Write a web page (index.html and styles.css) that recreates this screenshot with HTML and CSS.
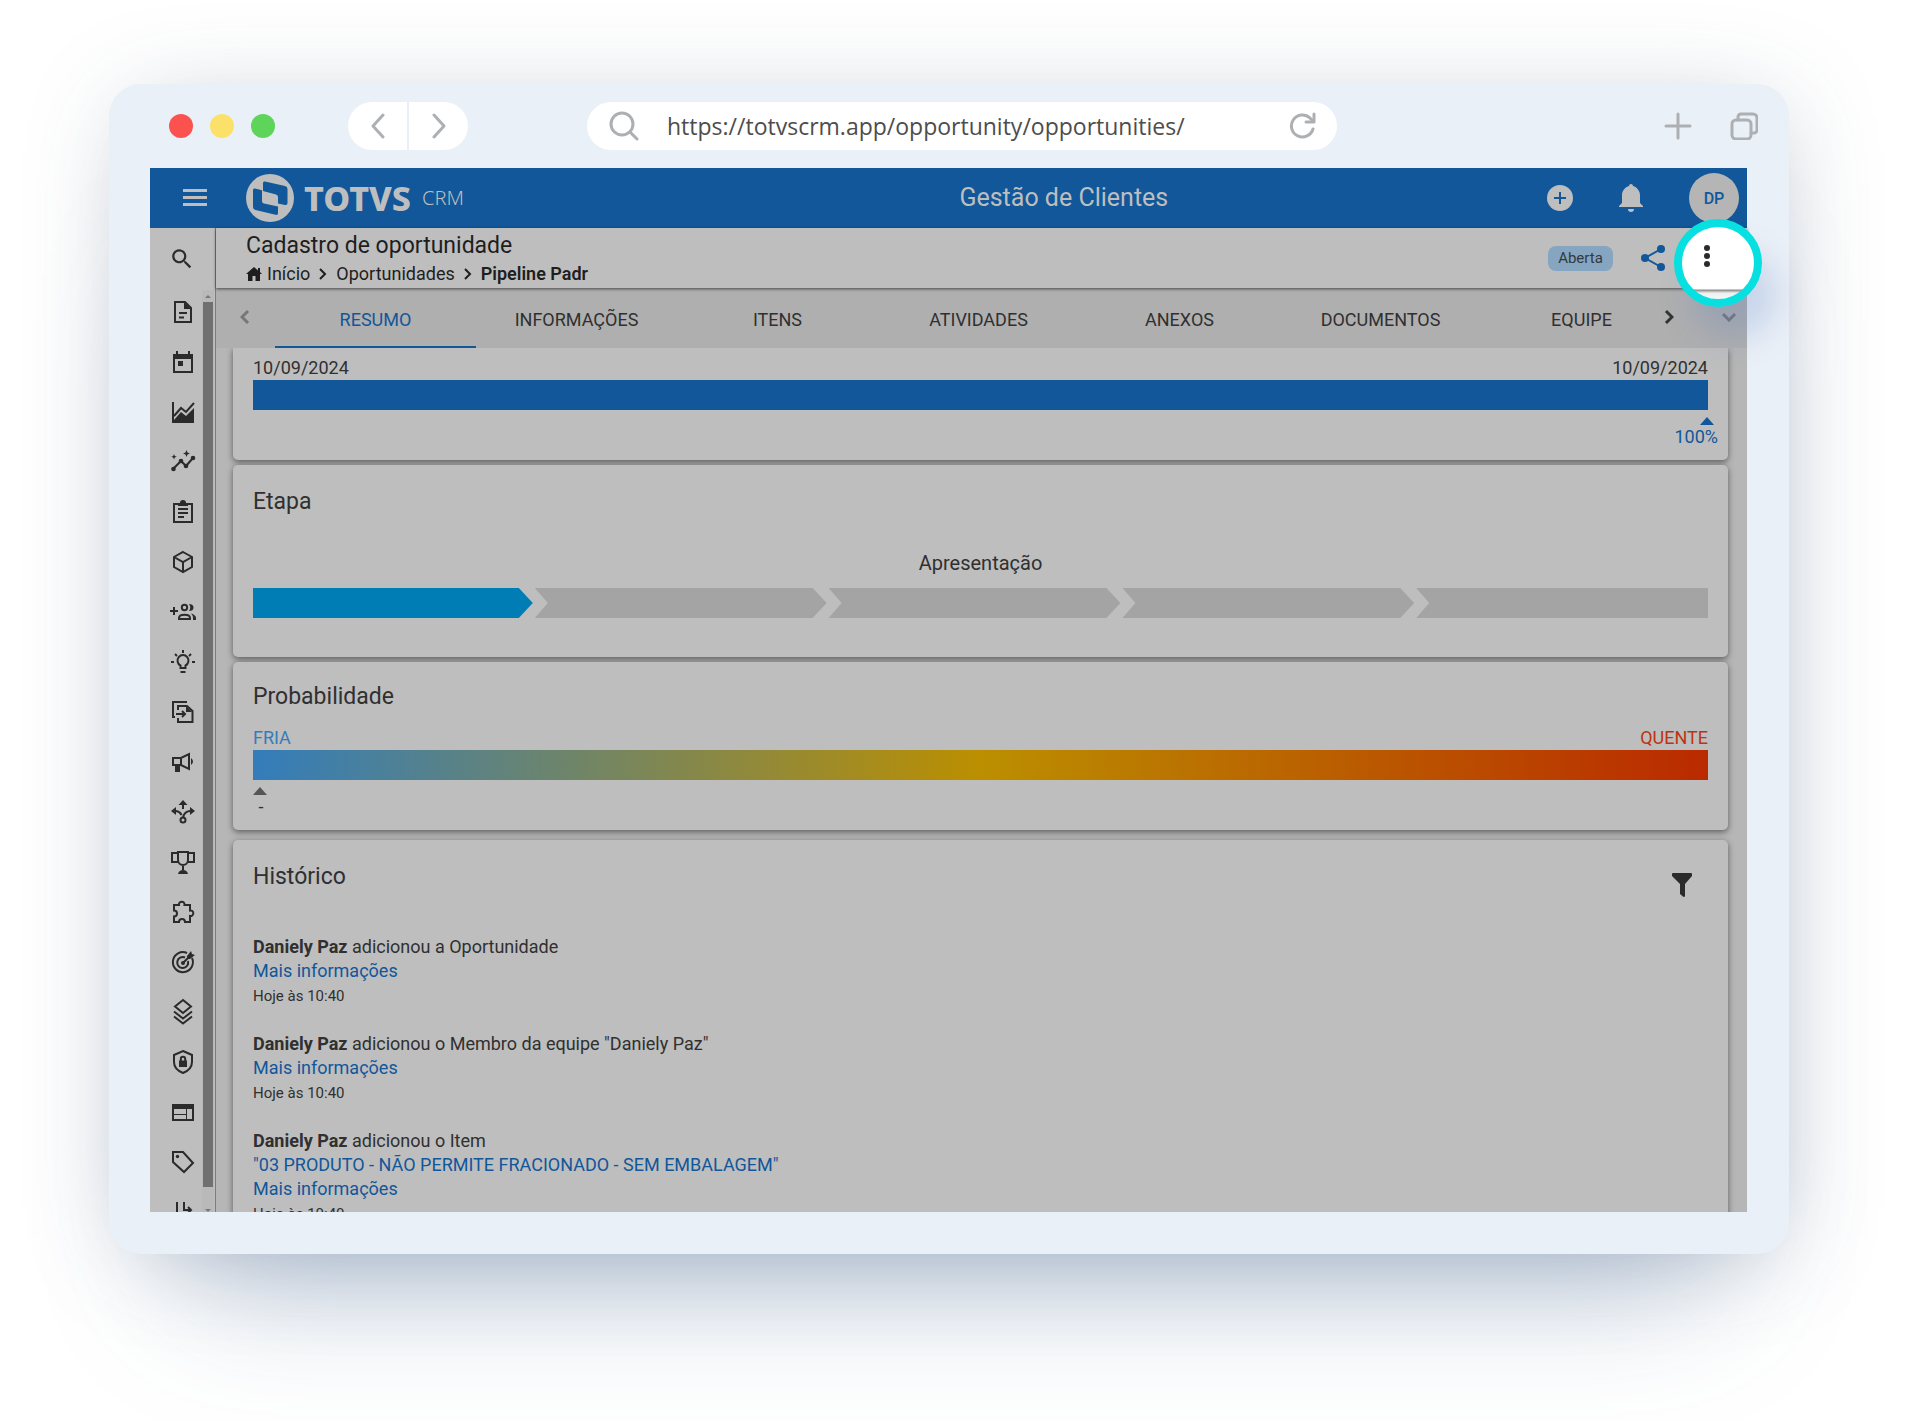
FILE: index.html
```html
<!DOCTYPE html>
<html lang="pt-BR">
<head>
<meta charset="utf-8">
<title>TOTVS CRM - Gestão de Clientes</title>
<link rel="stylesheet" href="styles.css">
</head>
<body>
<div class="window">
  <div class="chrome">
    <div class="lights"><span class="light red"></span><span class="light yellow"></span><span class="light green"></span></div>
    <div class="history-nav">
      <button type="button" aria-label="Voltar"><svg width="14" height="26" viewBox="0 0 14 26"><path d="M12 2 2 13l10 11"/></svg></button>
      <button type="button" aria-label="Avançar"><svg width="14" height="26" viewBox="0 0 14 26"><path d="m2 2 10 11L2 24"/></svg></button>
    </div>
    <div class="address">
      <svg width="30" height="30" viewBox="0 0 30 30"><circle cx="13" cy="13" r="11"/><path d="m21 21 7 7"/></svg>
      <input type="text" aria-label="Endereço" value="https://totvscrm.app/opportunity/opportunities/">
      <button type="button" aria-label="Recarregar"><svg width="28" height="28" viewBox="0 0 28 28"><path d="M24 17a11 11 0 1 1-3-11l3 3"/><path d="M25 2v8h-8"/></svg></button>
    </div>
    <div class="chrome-actions">
      <button type="button" aria-label="Nova aba"><svg width="28" height="28" viewBox="0 0 28 28"><path d="M14 2v24M2 14h24"/></svg></button>
      <button type="button" aria-label="Abas"><svg width="28" height="28" viewBox="0 0 28 28"><rect x="2" y="8" width="19" height="19" rx="4"/><path d="M8 8V5a3 3 0 0 1 3-3h12a4 4 0 0 1 4 4v12a3 3 0 0 1-3 3h-3"/></svg></button>
    </div>
  </div>

  <div class="screen">
    <header class="topbar">
      <button type="button" class="menu" aria-label="Menu"><svg width="24" height="18" viewBox="0 0 24 18"><path d="M0 1.5h24M0 8.5h24M0 15.5h24"/></svg></button>
      <div class="brand">
        <svg width="48" height="48" viewBox="0 0 48 48"><circle cx="24" cy="24" r="24" fill="#bebebe"/><path d="M19 7.500 39 12q2.500.6 2.500 3V29q0 2.500-2.500 2L32 29.500V23q0-2-2-2.500L17 17V9q0-2 2-1.500z" fill="#11579a"/><path d="M9 14.500 16 16.300V27q0 2 2 2.500L32 32.500V39q0 2.500-2.500 1.800L9.500 36Q7 35.300 7 33V16q0-2 2-1.500z" fill="#11579a"/></svg>
        <strong>TOTVS</strong><span>CRM</span>
      </div>
      <h1>Gestão de Clientes</h1>
      <div class="top-actions">
        <button type="button" aria-label="Adicionar"><svg width="26" height="26" viewBox="0 0 26 26"><circle cx="13" cy="13" r="13" fill="#bebebe"/><path d="M13 7v12M7 13h12" stroke="#11579a" stroke-width="2"/></svg></button>
        <button type="button" aria-label="Notificações"><svg width="24" height="28" viewBox="0 0 24 28"><path d="M12 0a2 2 0 0 1 2 2c4 1 7 5 7 9v8l3 3v1H0v-1l3-3v-8c0-4 3-8 7-9a2 2 0 0 1 2-2zM9 25h6a3 3 0 0 1-6 0z" fill="#bebebe"/></svg></button>
        <button type="button" class="avatar">DP</button>
      </div>
    </header>

    <div class="body">
      <nav class="sidebar" aria-label="Módulos">
        <div class="rail-search"><a href="#" aria-label="Buscar"><svg viewBox="0 0 24 24" class="search"><path class="f" d="M15.500 14h-.8l-.3-.3A6.500 6.500 0 1 0 13.700 14.400l.3.300v.8l5 5 1.500-1.500zm-6 0a4.500 4.500 0 1 1 0-9 4.500 4.500 0 0 1 0 9z"/></svg></a></div>
        <div class="rail">
          <div class="rail-icons">
            <a href="#" aria-label="Documentos"><svg viewBox="0 0 24 24"><path d="M4 2h10l6 6v14H4z"/><path class="f" d="M13 2v7h7z"/><path d="M8 13h8M8 17.500h5"/></svg></a>
            <a href="#" aria-label="Agenda"><svg viewBox="0 0 24 24"><path d="M3 5h18v17H3z"/><path class="f" d="M2 4h20v5H2zM5 1h2v4H5zM17 1h2v4h-2zM7 11h5v5H7z"/></svg></a>
            <a href="#" aria-label="Gráficos"><svg viewBox="0 0 24 24"><path d="M2 2v20h21M3 16l7-8 5 4 8-9"/><path class="f" d="M3 22v-2l7-8 5 4 8-8v14z"/></svg></a>
            <a href="#" aria-label="Indicadores"><svg viewBox="0 0 24 24"><path d="m3 18 7-7 5 5 7-8"/><circle class="f" cx="2.500" cy="19" r="2.300"/><circle class="f" cx="10" cy="11" r="2.300"/><circle class="f" cx="15" cy="16" r="2.300"/><circle class="f" cx="22" cy="8" r="2.300"/><path class="f" d="m15.500 0 1 2.500 2.500 1-2.500 1-1 2.500-1-2.500-2.500-1 2.500-1zM3 4l.8 2 2 .8-2 .8L3 9.500l-.8-1.900-2-.8 2-.8z"/></svg></a>
            <a href="#" aria-label="Tarefas"><svg viewBox="0 0 24 24"><path d="M3 4h18v18H3zM7 9h10M7 13h10M7 17h6"/><path class="f" d="M7 3h2a3 3 0 0 1 6 0h2v3H7z"/></svg></a>
            <a href="#" aria-label="Produtos"><svg viewBox="0 0 24 24"><path d="m12 2 9 5v10l-9 5-9-5V7zM3 7l9 5 9-5M12 12v10"/></svg></a>
            <a href="#" aria-label="Contatos"><svg viewBox="0 0 24 24" class="wide"><path d="M-1 11h8M3 7v8M8 19v-1c0-4.500 11-4.500 11 0v1z"/><circle cx="13.500" cy="7.500" r="2.700"/><path class="f" d="M18 4q4.500 0 4.500 3.500T18 11q2.500-3.500 0-7zM20 13.500q5 1.500 5 4.500v2h-3v-2q0-2.500-2-4.500z"/></svg></a>
            <a href="#" aria-label="Ideias"><svg viewBox="0 0 24 24"><path d="M9.500 18v-2.500a5.500 5.500 0 1 1 5 0V18zM9.500 22h5M12 0v3M0 12h3M21 12h3M4 4l2 2M20 4l-2 2"/></svg></a>
            <a href="#" aria-label="Transferências"><svg viewBox="0 0 24 24"><path d="M4 17H2V2h14M7 10V6h9l5.500 5v11H7v-4M5 14h9M11 11l3 3-3 3"/><path class="f" d="M15 6v6h6z"/></svg></a>
            <a href="#" aria-label="Campanhas"><svg viewBox="0 0 24 24"><path d="M2 8h8l8-4v15l-8-4H2zM10 8v7"/><path class="f" d="M4 15h5v7H4zM20 8q4 3.500 0 7z"/></svg></a>
            <a href="#" aria-label="Rotas"><svg viewBox="0 0 24 24"><circle cx="12" cy="20" r="2.500"/><path d="M12 9V3M2 11h3q4 .5 5.500 4M12 18q1-6.500 7-7h3"/><path class="f" d="m12 0 4.500 5h-9zM0 11l5-4v8zM24 11l-5-4v8z"/></svg></a>
            <a href="#" aria-label="Metas"><svg viewBox="0 0 24 24"><path d="M7 2h10v8a5 5 0 0 1-10 0zM7 3H1v9h6M17 3h6v9h-6M12 15v5"/><path class="f" d="M7 24q1-4 5-4t5 4z"/></svg></a>
            <a href="#" aria-label="Extensões"><svg viewBox="0 0 24 24"><path d="M3 5h5a2.800 2.800 0 1 1 5.500 0H19v5.500a2.800 2.800 0 1 1 0 5.500v6h-5a3 3 0 0 0-6 0H3v-5.500a3 3 0 0 0 0-6z"/></svg></a>
            <a href="#" aria-label="Objetivos"><svg viewBox="0 0 24 24"><path d="M16 3a10 10 0 1 0 5 5M14 7.500A5.500 5.500 0 1 0 17 11M12 13l8-8"/><circle class="f" cx="12" cy="13" r="2"/><path class="f" d="m16 6 4-5 1 3 3 1-5 4-3 0z"/></svg></a>
            <a href="#" aria-label="Camadas"><svg viewBox="0 0 24 24"><path d="m12 0 8 6.500-8 6.500-8-6.500zM3 11.500l9 7 9-7M3 16.500l9 7 9-7"/></svg></a>
            <a href="#" aria-label="Segurança"><svg viewBox="0 0 24 24"><path d="m12 1 9 4v7c0 5-4 9-9 11-5-2-9-6-9-11V5zM9.800 11V9a2.200 2.200 0 0 1 4.400 0v2"/><path class="f" d="M8 10.500h8V17H8z"/></svg></a>
            <a href="#" aria-label="Painéis"><svg viewBox="0 0 24 24"><path d="M2 5h20v15H2z"/><path class="f" d="M2 4h20v5H2z"/><path class="thin" d="M2 14.500h13M15.500 8v12"/></svg></a>
            <a href="#" aria-label="Etiquetas"><svg viewBox="0 0 24 24"><path d="M2 2h10l10 11-9 9L2 12z"/><circle class="f" cx="6.500" cy="6.500" r="1.700"/></svg></a>
            <a href="#" aria-label="Fluxos"><svg viewBox="0 0 24 24"><path d="M6 2v20M13 2v8h7M17 7l3 3-3 3"/></svg></a>
          </div>
          <div class="scrollbar" aria-hidden="true"><span class="up"></span><span class="thumb"></span><span class="down"></span></div>
        </div>
      </nav>

      <main class="main">
        <div class="page-head">
          <div class="titles">
            <h2>Cadastro de oportunidade</h2>
            <nav class="crumbs" aria-label="Navegação">
              <a href="#"><svg width="16" height="14" viewBox="0 0 16 14"><path d="M8 0 0 7h2v7h4.500V9h3v5H14V7h2l-2-2V1h-2v2.500z" fill="#1e1e1e"/></svg>Início</a>
              <svg class="sep" width="8" height="12" viewBox="0 0 8 12"><path d="m1 1 5 5-5 5"/></svg>
              <a href="#">Oportunidades</a>
              <svg class="sep" width="8" height="12" viewBox="0 0 8 12"><path d="m1 1 5 5-5 5"/></svg>
              <strong>Pipeline Padr</strong>
            </nav>
          </div>
          <span class="status">Aberta</span>
          <button type="button" class="share" aria-label="Compartilhar"><svg width="24" height="26" viewBox="0 0 24 26"><path d="M20 4 4 13l16 9" fill="none" stroke="#11579a" stroke-width="2"/><g fill="#11579a"><circle cx="20" cy="4" r="4"/><circle cx="4" cy="13" r="4"/><circle cx="20" cy="22" r="4"/></g></svg></button>
          <button type="button" class="spotlight" aria-label="Mais opções"><svg width="6" height="24" viewBox="0 0 6 24"><circle cx="3" cy="4" r="3"/><circle cx="3" cy="12" r="3"/><circle cx="3" cy="20" r="3"/></svg></button>
        </div>

        <nav class="tabs" aria-label="Seções">
          <button type="button" class="arrow off" aria-label="Anterior"><svg width="10" height="16" viewBox="0 0 10 16"><path d="M8 2 2 8l6 6"/></svg></button>
          <div class="tab-list">
            <a href="#" class="on">RESUMO</a><a href="#">INFORMAÇÕES</a><a href="#">ITENS</a><a href="#">ATIVIDADES</a><a href="#">ANEXOS</a><a href="#">DOCUMENTOS</a><a href="#">EQUIPE</a>
          </div>
          <button type="button" class="arrow" aria-label="Próximo"><svg width="10" height="16" viewBox="0 0 10 16"><path d="m2 2 6 6-6 6"/></svg></button>
          <button type="button" class="arrow more" aria-label="Expandir"><svg width="16" height="10" viewBox="0 0 16 10"><path d="m2 2 6 6 6-6"/></svg></button>
        </nav>

        <div class="content">
          <section class="card period">
            <div class="ends"><span>10/09/2024</span><span>10/09/2024</span></div>
            <div class="bar"></div>
            <div class="marker end"><i></i><span>100%</span></div>
          </section>
          <section class="card stage">
            <h3>Etapa</h3>
            <p>Apresentação</p>
            <div class="steps"><span class="done"></span><span></span><span></span><span></span><span></span></div>
          </section>
          <section class="card chance">
            <h3>Probabilidade</h3>
            <div class="ends"><span class="cold">FRIA</span><span class="hot">QUENTE</span></div>
            <div class="bar heat"></div>
            <div class="marker start"><i></i><span>-</span></div>
          </section>
          <section class="card log">
            <div class="log-head"><h3>Histórico</h3><button type="button" aria-label="Filtrar"><svg width="20" height="24" viewBox="0 0 20 24"><path d="M1 0h18q1 0 1 1v2l-7 8v12q0 1-1.500 1L8 21V11L0 3V1q0-1 1-1z" fill="#2b2b2b"/></svg></button></div>
            <ul>
              <li><div><strong>Daniely Paz</strong> adicionou a Oportunidade</div><a href="#">Mais informações</a><small>Hoje às 10:40</small></li>
              <li><div><strong>Daniely Paz</strong> adicionou o Membro da equipe "Daniely Paz"</div><a href="#">Mais informações</a><small>Hoje às 10:40</small></li>
              <li><div><strong>Daniely Paz</strong> adicionou o Item</div><a href="#">"03 PRODUTO - NÃO PERMITE FRACIONADO - SEM EMBALAGEM"</a><a href="#">Mais informações</a><small>Hoje às 10:40</small></li>
            </ul>
          </section>
        </div>
      </main>
    </div>
  </div>
</div>
</body>
</html>
```
FILE: styles.css
```css
* { box-sizing: border-box; }
body { margin: 0; padding: 84px 128px 167px 109px; background: #fff; font-family: Roboto, "Liberation Sans", sans-serif; font-size: 18px; color: #303030; overflow-x: hidden; }
button { border: 0; padding: 0; background: none; font: inherit; color: inherit; display: flex; align-items: center; justify-content: center; cursor: pointer; }
a { color: inherit; text-decoration: none; }
h1, h2, h3, p, ul { margin: 0; padding: 0; font-weight: 400; list-style: none; }
svg { display: block; flex: none; }

.window { background: #eaf0f7; border-radius: 32px; padding: 0 42px 42px 41px; box-shadow: 0 110px 130px -80px rgba(70, 105, 150, .36), 4px 10px 100px -20px rgba(60, 80, 110, .34); }
.chrome { height: 84px; display: flex; align-items: center; padding-left: 19px; }
.chrome svg { fill: none; stroke: #adb0b3; stroke-width: 3; stroke-linecap: round; stroke-linejoin: round; }
.lights { display: flex; gap: 17px; }
.light { width: 24px; height: 24px; border-radius: 50%; }
.red { background: #fb5250; }
.yellow { background: #fbe16a; }
.green { background: #5ed45a; }
.history-nav { display: flex; gap: 2px; margin-left: 73px; }
.history-nav button { width: 59px; height: 48px; background: #fff; }
.history-nav button:first-child { border-radius: 24px 0 0 24px; }
.history-nav button:last-child { border-radius: 0 24px 24px 0; }
.address { flex: 0 1 750px; height: 48px; margin-left: 119px; padding: 0 20px 0 22px; background: #fff; border-radius: 24px; display: flex; align-items: center; }
.address input { flex: 1; min-width: 0; margin-left: 28px; border: 0; padding: 0; outline: 0; background: none; color: #4d4d4d; font: 23px "Open Sans", "Noto Sans", sans-serif; }
.chrome-actions { margin-left: auto; display: flex; gap: 38px; margin-right: -11px; }

.screen { background: #bebebe; height: 1044px; display: flex; flex-direction: column; }
.topbar { height: 60px; flex: none; background: #11579a; color: #bebebe; display: grid; grid-template-columns: 96px 5fr auto 4fr; align-items: center; padding-right: 8px; }
.menu { justify-self: start; margin-left: 33px; }
.menu svg { stroke: #bebebe; stroke-width: 3; }
.brand { display: flex; align-items: center; }
.brand strong { margin-left: 10px; font: 800 34px/48px "Noto Sans", sans-serif; }
.brand span { margin-left: 11px; font: 300 20px/48px "Noto Sans", sans-serif; }
.topbar h1 { font-size: 25px; line-height: 60px; }
.top-actions { display: flex; justify-content: flex-end; align-items: center; gap: 46px; }
.avatar { width: 50px; height: 50px; border-radius: 50%; background: #b5b5b5; color: #11579a; font-size: 16px; font-weight: 500; }

.body { flex: 1; min-height: 0; display: flex; }
.sidebar { width: 66px; flex: none; display: flex; flex-direction: column; border-right: 1px solid #7c7c7c; }
.sidebar a { display: block; }
.sidebar svg { width: 24px; height: 24px; fill: none; stroke: #2b2b2b; stroke-width: 2; overflow: visible; }
.sidebar .f { fill: #2b2b2b; stroke: none; }
.sidebar .thin { stroke-width: 1; }
.rail-search { height: 62px; padding: 18px 0 0 19px; }
.rail-search .search { width: 26px; height: 26px; }
.rail { flex: 1; min-height: 0; overflow: hidden; display: flex; }
.rail-icons { width: 52px; padding: 10px 0 0 21px; display: flex; flex-direction: column; gap: 26px; }
.scrollbar { width: 12px; display: flex; flex-direction: column; align-items: center; background: #b9b9b9; }
.scrollbar .thumb { width: 10px; flex: 1; background: #707070; }
.up, .down { flex: none; height: 12px; border: 3px solid transparent; border-bottom: 3px solid #777; border-top-width: 5px; width: 6px; height: 8px; margin-bottom: 4px; }
.down { border-top: 3px solid #777; border-bottom: 0; height: 3px; margin: 22px 0 0; }

.main { flex: 1; min-width: 0; display: flex; flex-direction: column; }
.page-head { position: relative; z-index: 2; height: 60px; flex: none; padding: 0 82px 0 30px; display: flex; align-items: center; color: #1e1e1e; box-shadow: 0 1px 3px rgba(0, 0, 0, .6); background: #bebebe; }
.titles { flex: 1; padding-top: 2px; }
.titles h2 { font-size: 23px; line-height: 30px; }
.crumbs { display: flex; align-items: center; font-size: 18px; line-height: 26px; }
.crumbs a { display: flex; align-items: center; gap: 5px; }
.sep { margin: 0 9px; fill: none; stroke: #1e1e1e; stroke-width: 2; }
.crumbs strong { font-weight: 600; }
.status { width: 65px; height: 25px; border-radius: 8px; background: #86a5c0; color: #303a44; font-size: 15px; line-height: 25px; text-align: center; }
.share { margin-left: 28px; }
.spotlight { position: absolute; right: -15px; top: -9px; width: 88px; height: 88px; border-radius: 50%; border: 8px solid #08dfe0; background: linear-gradient(#fff 62px, #888 63px, #eee 66px, #f8f8f8); box-shadow: 16px 32px 32px rgba(80, 120, 190, .22); }
.spotlight svg { margin: -14px 22px 0 0; fill: #2b2b2b; }

.tabs { height: 60px; flex: none; background: #afafaf; display: flex; padding: 0 4px 0 15px; }
.arrow { width: 28px; flex: none; padding-bottom: 2px; }
.arrow svg { fill: none; stroke: #333; stroke-width: 3; }
.arrow.off svg, .arrow.more svg { stroke: #777; }
.arrow.more { margin-left: 32px; }
.arrow.off { width: 44px; padding-right: 16px; }
.tab-list { flex: 1; min-width: 0; display: grid; grid-template-columns: repeat(7, 201px); overflow: hidden; }
.tab-list a { display: flex; align-items: center; justify-content: center; height: 60px; padding-top: 2px; }
.tab-list .on { color: #11579a; border-bottom: 2px solid #11579a; padding-top: 4px; }

.content { flex: 1; min-height: 0; overflow: hidden; background: #b6b6b6; padding: 0 19px 0 17px; display: flex; flex-direction: column; }
.card { flex: none; background: #bebebe; border-radius: 5px; padding: 0 20px; box-shadow: 0 2px 6px rgba(0, 0, 0, .5); margin-bottom: 5px; }
.card h3 { font-size: 23px; line-height: 30px; }
.ends { display: flex; justify-content: space-between; line-height: 24px; }
.bar { height: 30px; background: #11579a; }
.marker { display: flex; flex-direction: column; line-height: 24px; padding-top: 7px; }
.marker i { width: 0; border: 7px solid transparent; border-top: 0; border-bottom: 8px solid #555; }
.marker.end { align-items: flex-end; color: #11579a; margin-right: -10px; }
.marker.end i { border-bottom-color: #11579a; margin-right: 4px; }
.marker.start { align-items: flex-start; }
.marker.start span { width: 16px; text-align: center; }
.period { height: 112px; padding-top: 8px; border-radius: 0 0 5px 5px; }
.stage { height: 192px; padding-top: 22px; }
.stage p { font-size: 20px; line-height: 28px; margin: 32px 0 11px; text-align: center; }
.steps { display: flex; gap: 2px; }
.steps span { flex: 292 1 0; height: 30px; background: #a4a4a4; clip-path: polygon(0 0, calc(100% - 14px) 0, 100% 50%, calc(100% - 14px) 100%, 0 100%, 13px 50%); }
.steps .done { flex-grow: 280; background: #007db4; clip-path: polygon(0 0, calc(100% - 14px) 0, 100% 50%, calc(100% - 14px) 100%, 0 100%); }
.steps span:last-child { clip-path: polygon(0 0, 100% 0, 100% 100%, 0 100%, 13px 50%); }
.chance { height: 168px; padding-top: 20px; margin-bottom: 10px; }
.chance .ends { margin-top: 14px; }
.cold { color: #337dbb; }
.hot { color: #bc3410; }
.heat { background: linear-gradient(90deg, #337dbb, #bb8f00 50%, #ba2a00); }
.log { padding-top: 22px; padding-bottom: 40px; }
.log-head { display: flex; justify-content: space-between; align-items: flex-start; padding-right: 16px; }
.log-head button { margin-top: 11px; }
.log ul { margin-top: 38px; display: flex; flex-direction: column; gap: 23px; line-height: 24px; }
.log li { display: flex; flex-direction: column; align-items: flex-start; }
.log li a { color: #11579a; }
.log small { font-size: 15px; line-height: 26px; }
.log strong { font-weight: 700; }
```
